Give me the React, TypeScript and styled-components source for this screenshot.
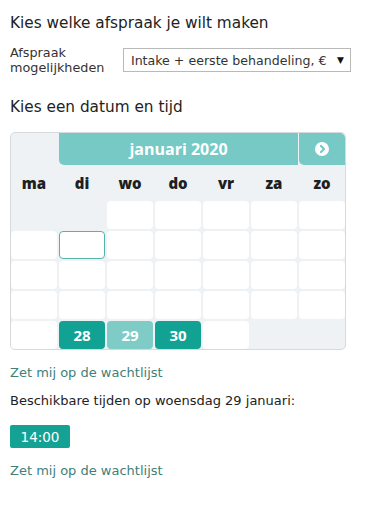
import React from "react";
import styled, { createGlobalStyle } from "styled-components";

const GlobalStyle = createGlobalStyle`
  body {
    margin: 0;
    background: #ffffff;
    font-family: "DejaVu Sans", Verdana, sans-serif;
    color: #222222;
  }
`;

const Page = styled.div`
  padding: 13px 10px 20px 10px;
  width: 361px;
  box-sizing: border-box;
`;

const Title = styled.h2`
  margin: 0;
  font-size: 15.3px;
  font-weight: normal;
  line-height: 20px;
  color: #222222;
`;

const FieldRow = styled.div`
  display: flex;
  align-items: center;
  margin: 12px 0 22px 0;
`;

const Label = styled.label`
  width: 115px;
  font-size: 12.8px;
  line-height: 15px;
  color: #333333;
`;

const Select = styled.div`
  display: flex;
  align-items: center;
  justify-content: space-between;
  width: 232px;
  height: 24px;
  box-sizing: border-box;
  padding: 0 6px 0 7px;
  border: 1px solid #b9b9b9;
  font-size: 12.6px;
  color: #333333;
  white-space: nowrap;
  overflow: hidden;
`;

const Caret = styled.span`
  font-size: 9px;
  color: #111111;
  margin-left: 6px;
`;

const Calendar = styled.div`
  margin-top: 15px;
  width: 336px;
  box-sizing: border-box;
  border: 1px solid #d6dadd;
  border-radius: 5px;
  background: #eef2f5;
  display: grid;
  grid-template-columns: repeat(7, 46px);
  grid-template-rows: 32px 32px repeat(5, 28px);
  gap: 2px;
  overflow: hidden;
  font-family: "Open Sans", "DejaVu Sans", sans-serif;
`;

const MonthTitle = styled.div`
  grid-column: 2 / span 5;
  background: #76c9c4;
  border-radius: 0 0 0 5px;
  color: #ffffff;
  font-weight: 700;
  font-size: 16px;
  display: flex;
  align-items: center;
  justify-content: center;
  margin-right: -1px;
`;

const NextButton = styled.div`
  background: #76c9c4;
  display: flex;
  align-items: center;
  justify-content: center;
  border-radius: 0 5px 0 5px;
`;

const DayName = styled.div`
  display: flex;
  align-items: center;
  justify-content: center;
  font-weight: 800;
  font-size: 15px;
  color: #1f1f1f;
`;

type CellKind = "empty" | "day" | "today" | "free" | "selected";

const Cell = styled.div<{ $kind: CellKind }>`
  border-radius: 4px;
  display: flex;
  align-items: center;
  justify-content: center;
  font-weight: 700;
  font-size: 15px;
  color: #ffffff;
  box-sizing: border-box;
  background: ${(p) =>
    p.$kind === "empty"
      ? "transparent"
      : p.$kind === "free"
      ? "#12a294"
      : p.$kind === "selected"
      ? "#7fccc6"
      : "#ffffff"};
  border: ${(p) => (p.$kind === "today" ? "1px solid #56b3ab" : "none")};
`;

const Link = styled.a<{ $top: number }>`
  display: block;
  margin-top: ${(p) => p.$top}px;
  font-size: 13px;
  color: #3f7f78;
  text-decoration: none;
  line-height: 16px;
`;

const Text = styled.p`
  margin: 12px 0 0 0;
  font-size: 13px;
  line-height: 16px;
  color: #222222;
`;

const TimeButton = styled.button`
  margin: 16px 0 0 0;
  width: 60px;
  height: 23px;
  border: none;
  border-radius: 2px;
  background: #14a295;
  color: #ffffff;
  font-family: "DejaVu Sans", Verdana, sans-serif;
  font-size: 13.5px;
  padding: 0;
`;

const days = ["ma", "di", "wo", "do", "vr", "za", "zo"];

// 35 cells, januari 2020 starts on a wednesday
const cells: { n: string; kind: CellKind }[] = Array.from({ length: 35 }, (_, i) => {
  const d = i - 1;
  if (d < 1 || d > 31) return { n: "", kind: "empty" };
  if (d === 7) return { n: "", kind: "today" };
  if (d === 28 || d === 30) return { n: String(d), kind: "free" };
  if (d === 29) return { n: String(d), kind: "selected" };
  return { n: "", kind: "day" };
});

export default function App() {
  return (
    <Page>
      <GlobalStyle />
      <Title>Kies welke afspraak je wilt maken</Title>
      <FieldRow>
        <Label>
          Afspraak
          <br />
          mogelijkheden
        </Label>
        <Select>
          <span>Intake + eerste behandeling, €</span>
          <Caret>▼</Caret>
        </Select>
      </FieldRow>
      <Title>Kies een datum en tijd</Title>
      <Calendar>
        <div />
        <MonthTitle>januari 2020</MonthTitle>
        <NextButton>
          <svg width="14" height="14" viewBox="0 0 14 14">
            <circle cx="7" cy="7" r="7" fill="#ffffff" />
            <path d="M6 4 L9 7 L6 10" stroke="#76c9c4" strokeWidth="2.2" fill="none" strokeLinecap="round" strokeLinejoin="round" />
          </svg>
        </NextButton>
        {days.map((d) => (
          <DayName key={d}>{d}</DayName>
        ))}
        {cells.map((c, i) => (
          <Cell key={i} $kind={c.kind}>
            {c.n}
          </Cell>
        ))}
      </Calendar>
      <Link href="#" $top={15}>
        Zet mij op de wachtlijst
      </Link>
      <Text>Beschikbare tijden op woensdag 29 januari:</Text>
      <TimeButton>14:00</TimeButton>
      <Link href="#" $top={15}>
        Zet mij op de wachtlijst
      </Link>
    </Page>
  );
}
